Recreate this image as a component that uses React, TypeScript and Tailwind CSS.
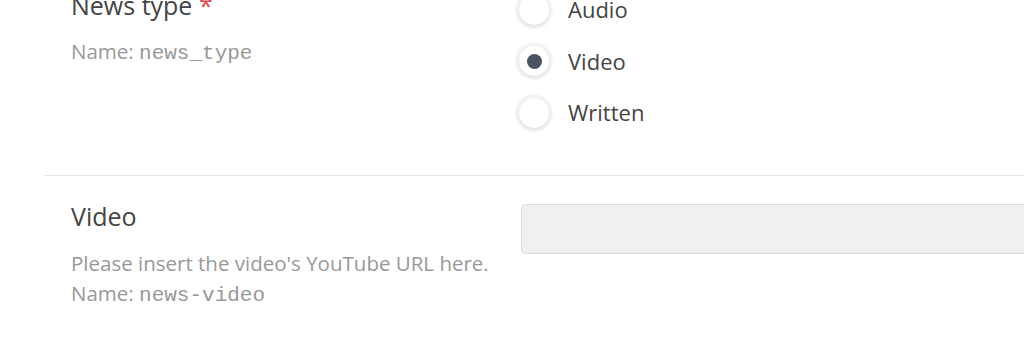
import React from "react";

const options = ["Audio", "Video", "Written"];

function Radio({ checked }: { checked: boolean }) {
  return (
    <span className="grid h-[30px] w-[30px] shrink-0 place-items-center rounded-full bg-white shadow-[0_0_0_4px_rgba(0,0,0,0.035),0_1px_4px_rgba(0,0,0,0.12)]">
      {checked && <span className="h-[15px] w-[15px] rounded-full bg-[#4a5361]" />}
    </span>
  );
}

export default function App() {
  return (
    <div className="h-[359px] w-full overflow-hidden bg-white font-['Open_Sans',sans-serif] text-[#444]">
      <div className="ml-[44px] mt-[-16px]">
        <section className="flex pb-[36.5px] pl-[27px]">
          <div className="w-[448px] shrink-0 pt-[3px]">
            <h3 className="text-[25px] leading-[36px]">
              News type <span className="text-[#e5484d]">*</span>
            </h3>
            <p className="mt-[13px] text-[20.5px] leading-[30px] text-[#999]">
              Name: <code className="font-['Liberation_Mono',monospace] text-[21px]">news_type</code>
            </p>
          </div>
          <div className="flex flex-col">
            {options.map((o) => (
              <label key={o} className="flex h-[51.5px] items-center gap-[19px]">
                <Radio checked={o === "Video"} />
                <span className="text-[22px]">{o}</span>
              </label>
            ))}
          </div>
        </section>
        <div className="h-px bg-[#e4e4e4]" />
        <section className="flex items-start pl-[27px] pt-[22px]">
          <div className="w-[450px] shrink-0">
            <h3 className="text-[25px] leading-[36px]">Video</h3>
            <div className="mt-[14px] text-[20.5px] leading-[30px] text-[#999]">
              <p>Please insert the video's YouTube URL here.</p>
              <p>
                Name: <code className="font-['Liberation_Mono',monospace] text-[21px]">news-video</code>
              </p>
            </div>
          </div>
          <input
            disabled
            className="mt-[6px] h-[50px] w-[600px] shrink-0 rounded-[4px] border border-[#dcdcdc] bg-[#f0f0f0]"
          />
        </section>
      </div>
    </div>
  );
}
